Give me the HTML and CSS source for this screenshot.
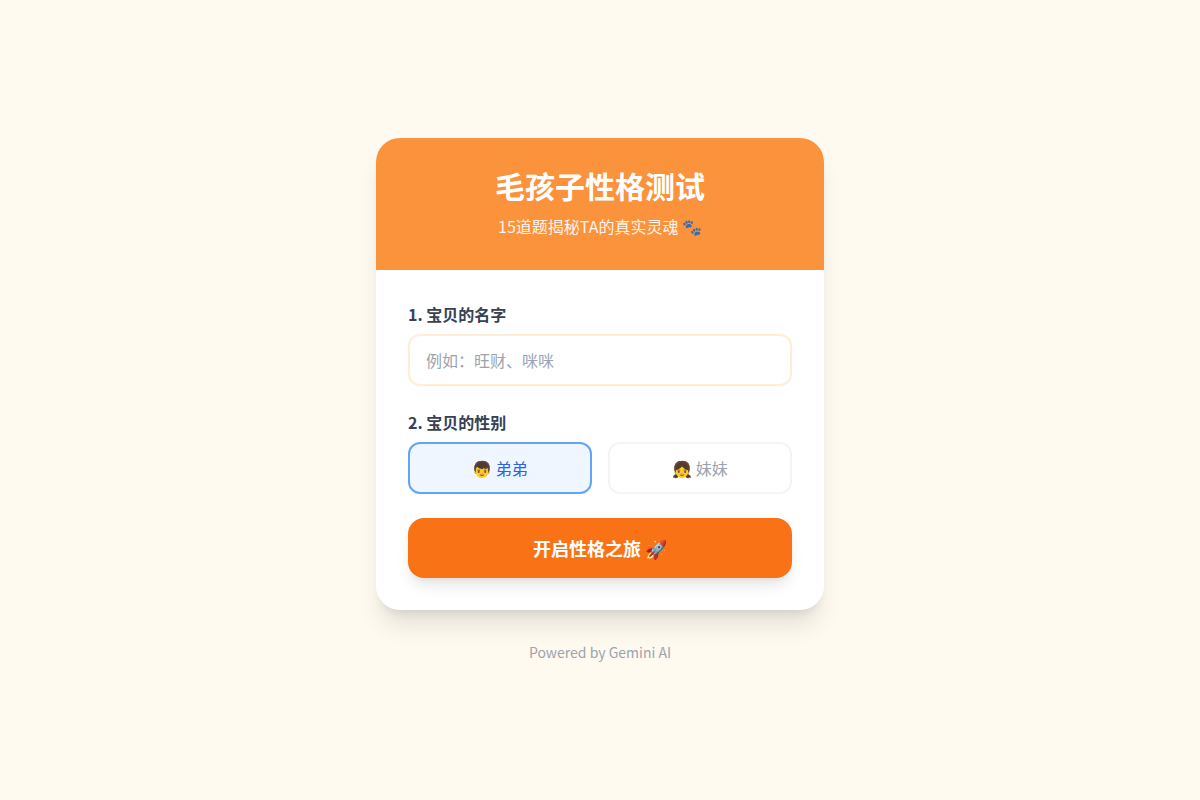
FILE: index.html
```html
<!DOCTYPE html>
<html lang="zh-CN">
<head>
  <meta charset="UTF-8">
  <meta name="viewport" content="width=device-width, initial-scale=1.0">
  <title>毛孩子性格测试</title>
  <link rel="stylesheet" href="styles.css">
</head>
<body>
  <main class="card">
    <header class="card_hd">
      <h1 class="title">毛孩子性格测试</h1>
      <p class="subtitle">15道题揭秘TA的真实灵魂 🐾</p>
    </header>
    <form class="card_bd" id="petForm">
      <div class="field">
        <label class="field_label" for="petName">1. 宝贝的名字</label>
        <input type="text" id="petName" class="name_input" placeholder="例如：旺财、咪咪">
      </div>
      <div class="field" role="group" aria-labelledby="genderLabel">
        <span class="field_label" id="genderLabel">2. 宝贝的性别</span>
        <div class="gender_list">
          <button type="button" class="gender_btn gender_boy active" aria-pressed="true">👦 弟弟</button>
          <button type="button" class="gender_btn gender_girl" aria-pressed="false">👧 妹妹</button>
        </div>
      </div>
      <button type="submit" class="start_btn">开启性格之旅 🚀</button>
    </form>
  </main>
  <footer class="footer">Powered by Gemini AI</footer>
  <script>
    const genderBtns = document.querySelectorAll('.gender_btn');

    genderBtns.forEach((btn) => {
      btn.addEventListener('click', () => {
        genderBtns.forEach((item) => {
          item.classList.toggle('active', item === btn);
          item.setAttribute('aria-pressed', item === btn);
        });
      });
    });

    document.getElementById('petForm').addEventListener('submit', (e) => {
      e.preventDefault();
      document.getElementById('petName').focus();
    });
  </script>
</body>
</html>
```
FILE: styles.css
```css
* {
  box-sizing: border-box;
}
body {
  display: flex;
  flex-direction: column;
  align-items: center;
  justify-content: center;
  min-height: 100vh;
  margin: 0;
  padding: 16px;
  background-color: #fffaf0;
  font-family: "Noto Sans CJK SC", sans-serif;
  font-size: 16px;
  line-height: 24px;
}
button,
input {
  font: inherit;
}
.card {
  width: 100%;
  max-width: 448px;
  border-radius: 24px;
  overflow: hidden;
  background-color: #fff;
  box-shadow: 0 20px 25px -5px rgba(0, 0, 0, 0.1), 0 8px 10px -6px rgba(0, 0, 0, 0.1);
}
.card_hd {
  padding: 32px;
  background-color: #fb923c;
  color: #fff;
  text-align: center;
}
.title {
  margin: 0 0 14px;
  font-size: 30px;
  line-height: 30px;
}
.subtitle {
  margin: 0;
  opacity: 0.9;
}
.card_bd {
  display: flex;
  flex-direction: column;
  gap: 24px;
  padding: 32px;
}
.field_label {
  display: block;
  margin-bottom: 8px;
  color: #374151;
  font-weight: bold;
}
.name_input {
  display: block;
  width: 100%;
  padding: 12px 16px;
  border: 2px solid #ffedd5;
  border-radius: 12px;
  outline: none;
  color: #374151;
}
.name_input::placeholder {
  color: #9ca3af;
}
.name_input:focus {
  border-color: #fb923c;
}
.gender_list {
  display: flex;
  gap: 16px;
}
.gender_btn {
  flex: 1;
  padding: 12px;
  border: 2px solid #f3f4f6;
  border-radius: 12px;
  background-color: #fff;
  color: #9ca3af;
  cursor: pointer;
}
.gender_boy.active {
  border-color: #60a5fa;
  background-color: #eff6ff;
  color: #2563eb;
}
.gender_girl.active {
  border-color: #f472b6;
  background-color: #fdf2f8;
  color: #db2777;
}
.start_btn {
  padding: 16px;
  border: none;
  border-radius: 16px;
  background-color: #f97316;
  box-shadow: 0 10px 15px -3px rgba(0, 0, 0, 0.1), 0 4px 6px -4px rgba(0, 0, 0, 0.1);
  color: #fff;
  font-size: 18px;
  font-weight: bold;
  line-height: 28px;
  cursor: pointer;
}
.start_btn:hover {
  background-color: #ea580c;
}
.footer {
  margin-top: 32px;
  color: #9ca3af;
  font-size: 14px;
  line-height: 20px;
}
```
